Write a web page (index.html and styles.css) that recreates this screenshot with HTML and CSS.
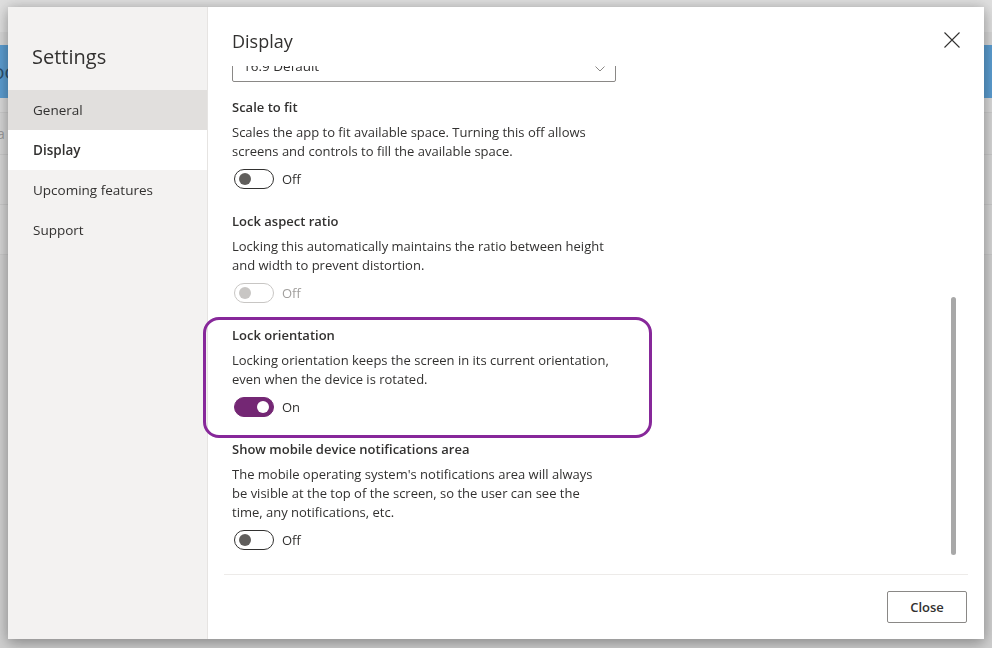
FILE: index.html
```html
<!DOCTYPE html>
<html lang="en">
<head>
<meta charset="utf-8">
<title>Settings</title>
<link rel="stylesheet" href="styles.css">
</head>
<body>
<div class="page">
  <div class="page-top"></div>
  <div class="page-sub"></div>
  <div class="page-blue"><span>Doo</span></div>
  <div class="page-gap"></div>
  <div class="page-row"><span>Data</span></div>
  <div class="page-row tall"></div>
  <div class="page-row tall"></div>
</div>

<div class="dialog">
  <nav class="sidebar">
    <h1 class="sidebar-title">Settings</h1>
    <ul class="nav">
      <li class="nav-item hover">General</li>
      <li class="nav-item active">Display</li>
      <li class="nav-item">Upcoming features</li>
      <li class="nav-item">Support</li>
    </ul>
  </nav>

  <section class="main">
    <header class="main-header">
      <h2 class="main-title">Display</h2>
      <button class="close-x" aria-label="Close">
        <svg width="16" height="16" viewBox="0 0 16 16"><path d="M0.5 0.5L15.5 15.5M15.5 0.5L0.5 15.5" stroke="#323130" stroke-width="1.1" fill="none"/></svg>
      </button>
    </header>

    <div class="scroll">
      <div class="content">
        <div class="dropdown">
          <span>16:9 Default</span>
          <svg class="chevron" width="10" height="6" viewBox="0 0 10 6"><path d="M0.5 0.5L5 5L9.5 0.5" stroke="#8a8886" stroke-width="1" fill="none"/></svg>
        </div>

        <div class="setting first">
          <div class="setting-title">Scale to fit</div>
          <p class="setting-desc">Scales the app to fit available space. Turning this off allows screens and controls to fill the available space.</p>
          <div class="toggle-row"><span class="toggle"><span class="knob"></span></span><span class="toggle-label">Off</span></div>
        </div>

        <div class="setting">
          <div class="setting-title">Lock aspect ratio</div>
          <p class="setting-desc">Locking this automatically maintains the ratio between height and width to prevent distortion.</p>
          <div class="toggle-row disabled"><span class="toggle"><span class="knob"></span></span><span class="toggle-label">Off</span></div>
        </div>

        <div class="setting">
          <div class="setting-title">Lock orientation</div>
          <p class="setting-desc">Locking orientation keeps the screen in its current orientation, even when the device is rotated.</p>
          <div class="toggle-row on"><span class="toggle"><span class="knob"></span></span><span class="toggle-label">On</span></div>
        </div>

        <div class="setting">
          <div class="setting-title">Show mobile device notifications area</div>
          <p class="setting-desc">The mobile operating system's notifications area will always be visible at the top of the screen, so the user can see the time, any notifications, etc.</p>
          <div class="toggle-row"><span class="toggle"><span class="knob"></span></span><span class="toggle-label">Off</span></div>
        </div>
      </div>
      <div class="thumb"></div>
    </div>

    <footer class="main-footer">
      <button class="btn">Close</button>
    </footer>
  </section>

  <div class="highlight"></div>
</div>
</body>
</html>
```

FILE: styles.css
```css
* { box-sizing: border-box; }
html, body { margin: 0; padding: 0; }
body {
  width: 992px;
  height: 648px;
  overflow: hidden;
  background: #cfcfcf;
  font-family: "Open Sans", "Noto Sans", sans-serif;
  color: #323130;
}

/* dimmed page behind the dialog */
.page { display: flex; flex-direction: column; }
.page-top { height: 32px; background: #dedede; }
.page-sub { height: 13px; background: #d6d6d6; }
.page-blue {
  height: 53px;
  background: #5b9ccf;
  color: #2d4f6b;
  font-size: 20px;
  line-height: 53px;
}
.page-blue span { margin-left: -22px; }
.page-gap { height: 15px; background: #d9d9d9; border-bottom: 1px solid #cbcbcb; }
.page-row {
  height: 42px;
  background: #d4d4d4;
  border-bottom: 1px solid #c8c8c8;
  color: #9a9a9a;
  font-size: 14px;
  line-height: 42px;
}
.page-row span { margin-left: -26px; }
.page-row.tall { height: 50px; }

/* dialog */
.dialog {
  position: fixed;
  left: 8px;
  top: 7px;
  width: 976px;
  height: 632px;
  display: flex;
  background: #fff;
  box-shadow: 0 0 12px rgba(0,0,0,0.18), 0 6px 14px rgba(0,0,0,0.22);
}

.sidebar {
  width: 200px;
  flex: none;
  background: #f3f2f1;
  border-right: 1px solid #e6e4e2;
}
.sidebar-title {
  margin: 36px 0 19px 24px;
  font-size: 20px;
  line-height: 28px;
  font-weight: 400;
  color: #323130;
}
.nav { list-style: none; margin: 0; padding: 0; }
.nav-item {
  height: 40px;
  line-height: 40px;
  padding-left: 25px;
  font-size: 13.5px;
  color: #323130;
}
.nav-item.hover { background: #e1dfdd; }
.nav-item.active { background: #fff; font-weight: 600; }

.main {
  flex: 1;
  display: flex;
  flex-direction: column;
  min-width: 0;
}
.main-header {
  height: 59px;
  flex: none;
  display: flex;
  align-items: flex-start;
  justify-content: space-between;
  padding: 21px 16px 0 24px;
}
.main-title {
  margin: 0;
  font-size: 18px;
  line-height: 26px;
  font-weight: 400;
  color: #323130;
}
.close-x {
  width: 32px;
  height: 32px;
  margin-top: -4px;
  border: 0;
  padding: 0;
  background: transparent;
  display: flex;
  align-items: center;
  justify-content: center;
}

.scroll {
  flex: 1;
  position: relative;
  overflow: hidden;
  padding-left: 24px;
}
.content { width: 390px; }
.dropdown {
  margin-top: -16px;
  width: 384px;
  height: 32px;
  border: 1px solid #8a8886;
  border-radius: 2px;
  display: flex;
  align-items: center;
  justify-content: space-between;
  padding: 0 10px 0 10px;
  font-size: 13.5px;
  color: #323130;
}
.chevron { margin-top: 6px; }
.setting { margin-bottom: 22px; }
.setting.first { margin-top: 15px; }
.setting-title {
  font-size: 13px;
  line-height: 20px;
  font-weight: 600;
  color: #323130;
  margin-bottom: 6px;
}
.setting-desc {
  margin: 0;
  font-size: 13px;
  line-height: 19px;
  color: #323130;
  max-width: 378px;
}
.toggle-row {
  margin-top: 8px;
  height: 20px;
  display: flex;
  align-items: center;
  padding-left: 2px;
}
.toggle {
  width: 40px;
  height: 20px;
  border: 1px solid #323130;
  border-radius: 10px;
  display: flex;
  align-items: center;
  padding: 0 4px;
  background: #fff;
}
.knob {
  width: 12px;
  height: 12px;
  border-radius: 50%;
  background: #605e5c;
}
.toggle-label {
  margin-left: 8px;
  font-size: 13px;
  color: #323130;
}
.toggle-row.disabled .toggle { border-color: #c8c6c4; }
.toggle-row.disabled .knob { background: #c8c6c4; }
.toggle-row.disabled .toggle-label { color: #a19f9d; }
.toggle-row.on .toggle {
  background: #742774;
  border-color: #742774;
  justify-content: flex-end;
}
.toggle-row.on .knob { background: #fff; }

.thumb {
  position: absolute;
  left: 743px;
  top: 231px;
  width: 5px;
  height: 258px;
  border-radius: 3px;
  background: #a8a8a8;
}

.main-footer {
  flex: none;
  margin: 0 16px;
  border-top: 1px solid #edebe9;
  padding: 16px 0;
  display: flex;
  justify-content: flex-end;
}
.btn {
  width: 80px;
  height: 32px;
  border: 1px solid #8a8886;
  border-radius: 2px;
  background: #fff;
  font-family: inherit;
  font-size: 13px;
  font-weight: 600;
  color: #323130;
  margin-right: 1px;
}

.highlight {
  position: absolute;
  left: 195px;
  top: 310px;
  width: 449px;
  height: 121px;
  border: 3px solid #87289a;
  border-radius: 16px;
  pointer-events: none;
}
```
